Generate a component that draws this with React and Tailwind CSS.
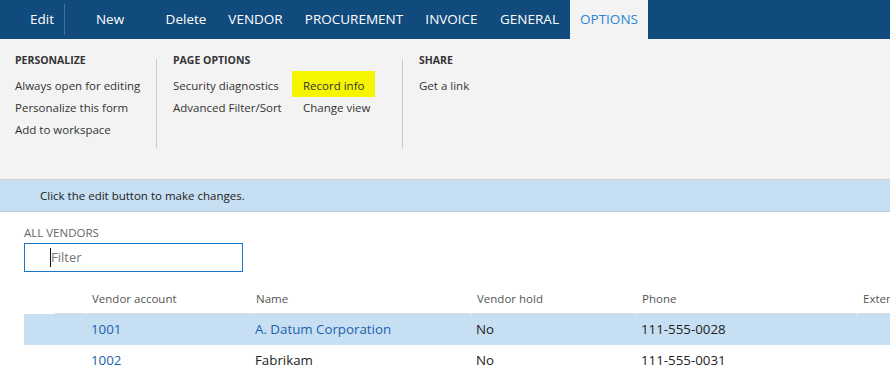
const tabs = [
  { label: "New", w: "w-[90px]" },
  { label: "Delete", w: "w-[62px]" },
  { label: "VENDOR", w: "w-[77px]" },
  { label: "PROCUREMENT", w: "w-[120px]" },
  { label: "INVOICE", w: "w-[75px]" },
  { label: "GENERAL", w: "w-[81px]" },
];

const vendors = [
  { account: "1001", name: "A. Datum Corporation", hold: "No", phone: "111-555-0028", selected: true },
  { account: "1002", name: "Fabrikam", hold: "No", phone: "111-555-0031", selected: false },
];

function RibbonItem({ children, highlight }) {
  return (
    <div
      className={
        highlight
          ? "h-[22px] leading-[22px] px-[11px] -mt-[4px] pt-[4px] box-content whitespace-nowrap bg-[#f5f500] w-fit"
          : "h-[22px] leading-[22px] px-[11px] whitespace-nowrap"
      }
    >
      {children}
    </div>
  );
}

function Separator() {
  return <div className="w-px h-[89px] mt-[20px] shrink-0 bg-[#c9c9c9]" />;
}

export default function App() {
  return (
    <div className="w-[890px] h-[387px] overflow-hidden bg-white text-[#333] font-['Segoe_UI','Open_Sans',sans-serif]">
      {/* top action bar */}
      <div className="flex h-[39px] bg-[#114a7c] text-white text-[13.5px]">
        <div className="w-[64px] shrink-0 pl-[30px] leading-[39px]">Edit</div>
        <div className="w-px shrink-0 my-[4px] bg-[#4a6f96]" />
        {tabs.map((t) => (
          <div key={t.label} className={`${t.w} shrink-0 text-center leading-[39px]`}>
            {t.label}
          </div>
        ))}
        <div className="w-[78px] shrink-0 text-center leading-[39px] bg-[#f3f3f3] text-[#2a87d8]">
          OPTIONS
        </div>
      </div>

      {/* ribbon */}
      <div className="flex h-[141px] bg-[#f3f3f3] border-b border-[#d2d2d2] text-[11.5px] text-[#333]">
        <div className="w-[156px] shrink-0 pl-[4px] pt-[14px]">
          <div className="px-[11px] text-[10.5px] font-bold leading-[14px]">PERSONALIZE</div>
          <div className="mt-[8px]">
            <RibbonItem>Always open for editing</RibbonItem>
            <RibbonItem>Personalize this form</RibbonItem>
            <RibbonItem>Add to workspace</RibbonItem>
          </div>
        </div>
        <Separator />
        <div className="w-[245px] shrink-0 pl-[5px] pt-[14px]">
          <div className="px-[11px] text-[10.5px] font-bold leading-[14px]">PAGE OPTIONS</div>
          <div className="mt-[8px] flex">
            <div className="w-[130px] shrink-0">
              <RibbonItem>Security diagnostics</RibbonItem>
              <RibbonItem>Advanced Filter/Sort</RibbonItem>
            </div>
            <div>
              <RibbonItem highlight>Record info</RibbonItem>
              <RibbonItem>Change view</RibbonItem>
            </div>
          </div>
        </div>
        <Separator />
        <div className="pl-[5px] pt-[14px]">
          <div className="px-[11px] text-[10.5px] font-bold leading-[14px]">SHARE</div>
          <div className="mt-[8px]">
            <RibbonItem>Get a link</RibbonItem>
          </div>
        </div>
      </div>

      {/* info bar */}
      <div className="h-[32px] bg-[#c7dff3] border-b border-[#b9cde0] pl-[40px] leading-[31px] text-[11.5px] text-[#222]">
        Click the edit button to make changes.
      </div>

      {/* list */}
      <div className="pl-[24px]">
        <div className="mt-[14px] text-[11.5px] leading-[14px] text-[#666]">ALL VENDORS</div>
        <div className="mt-[3px] w-[219px] h-[29px] border border-[#1a76cc] flex items-center pl-[25px]">
          <div className="w-px h-[19px] bg-[#111]" />
          <span className="text-[13px] text-[#777]">Filter</span>
        </div>

        <div className="mt-[13px] text-[11.5px] text-[#555]">
          <div className="flex h-[29px] items-center">
            <div className="w-[30px] shrink-0 h-full" />
            <div className="w-[31px] shrink-0 h-full ml-px border-b border-[#dcdcdc]" />
            <div className="w-[163px] shrink-0 h-full ml-px pl-[5px] flex items-center border-b border-[#dcdcdc]">Vendor account</div>
            <div className="w-[220px] shrink-0 h-full ml-px pl-[5px] flex items-center border-b border-[#dcdcdc]">Name</div>
            <div className="w-[163px] shrink-0 h-full ml-px pl-[5px] flex items-center border-b border-[#dcdcdc]">Vendor hold</div>
            <div className="w-[220px] shrink-0 h-full ml-px pl-[6px] flex items-center border-b border-[#dcdcdc]">Phone</div>
            <div className="w-[120px] shrink-0 h-full ml-px pl-[6px] flex items-center border-b border-[#dcdcdc] whitespace-nowrap">Extension</div>
          </div>
          {vendors.map((v) => (
            <div
              key={v.account}
              className={`flex h-[31px] items-center text-[13.3px] ${v.selected ? "bg-[#c7dff3]" : ""}`}
            >
              <div className="w-[62px] shrink-0" />
              <div className="w-[164px] shrink-0 pl-[5px] text-[#1a62ad]">{v.account}</div>
              <div className={`w-[221px] shrink-0 pl-[5px] ${v.selected ? "text-[#1a62ad]" : "text-[#222]"}`}>{v.name}</div>
              <div className="w-[164px] shrink-0 pl-[5px] text-[#222]">{v.hold}</div>
              <div className="w-[221px] shrink-0 pl-[6px] text-[#222]">{v.phone}</div>
            </div>
          ))}
        </div>
      </div>
    </div>
  );
}
